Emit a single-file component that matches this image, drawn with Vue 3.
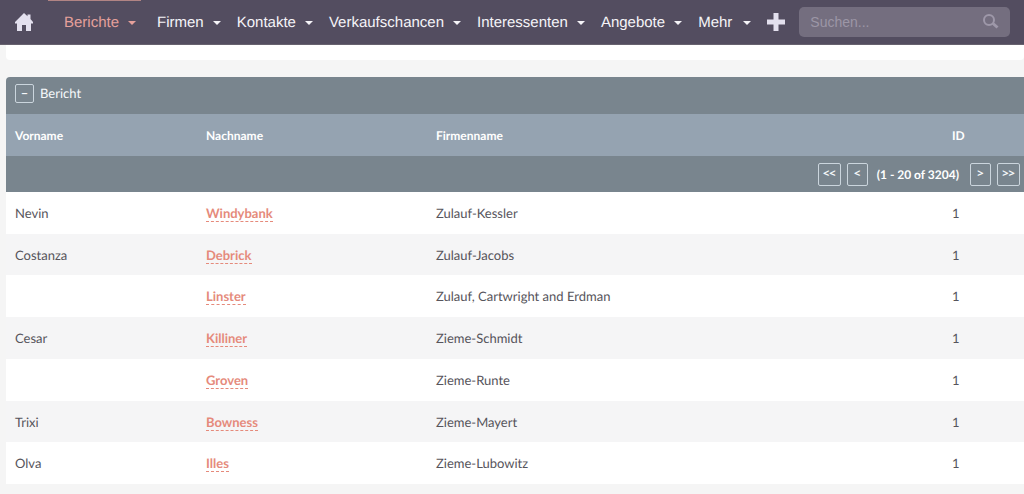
<script setup>
const menu = ['Berichte', 'Firmen', 'Kontakte', 'Verkaufschancen', 'Interessenten', 'Angebote', 'Mehr']
const rows = [
  ['Nevin', 'Windybank', 'Zulauf-Kessler', 1],
  ['Costanza', 'Debrick', 'Zulauf-Jacobs', 1],
  ['', 'Linster', 'Zulauf, Cartwright and Erdman', 1],
  ['Cesar', 'Killiner', 'Zieme-Schmidt', 1],
  ['', 'Groven', 'Zieme-Runte', 1],
  ['Trixi', 'Bowness', 'Zieme-Mayert', 1],
  ['Olva', 'Illes', 'Zieme-Lubowitz', 1],
]
</script>

<template>
  <div class="page">
    <header class="bar">
      <a class="home" href="#" aria-label="Startseite">
        <svg width="18" height="18" viewBox="0 0 18 18"><path d="M9 0 12.5 3.3V1.5h3v4.600L18 9v1.500h-2V18h-5v-6H7v6H2v-7.500H0V9z" /></svg>
      </a>
      <nav class="menu">
        <a v-for="(item, i) in menu" :key="item" href="#" :class="{ active: i === 0, more: item === 'Mehr' }">
          {{ item }}
          <svg class="caret" width="8" height="4" viewBox="0 0 8 4"><path d="M0 0h8L4 4z" /></svg>
        </a>
      </nav>
      <button class="add" type="button" aria-label="Neu">
        <svg width="18" height="18" viewBox="0 0 18 18"><path d="M6.500 0h5v6.500H18v5h-6.500V18h-5v-6.500H0v-5h6.500z" /></svg>
      </button>
      <form class="search" @submit.prevent>
        <input type="text" placeholder="Suchen..." aria-label="Suchen">
        <button type="submit" aria-label="Suche starten">
          <svg width="16" height="16" viewBox="0 0 16 16"><circle cx="6" cy="6" r="5" /><path class="handle" d="m10 9.500 4.500 4" /></svg>
        </button>
      </form>
    </header>

    <main>
      <div class="above"></div>
      <section class="report">
        <h2><button type="button" class="box toggle" aria-label="Einklappen">−</button>Bericht</h2>
        <table>
          <colgroup><col class="c-first"><col class="c-last"><col><col class="c-id"></colgroup>
          <thead>
            <tr class="heads"><th>Vorname</th><th>Nachname</th><th>Firmenname</th><th>ID</th></tr>
            <tr class="paging">
              <td colspan="4">
                <div class="pager">
                  <button type="button" class="box wide">&lt;&lt;</button>
                  <button type="button" class="box">&lt;</button>
                  <span>(1 - 20 of 3204)</span>
                  <button type="button" class="box">&gt;</button>
                  <button type="button" class="box wide">&gt;&gt;</button>
                </div>
              </td>
            </tr>
          </thead>
          <tbody>
            <tr v-for="r in rows" :key="r[1]">
              <td>{{ r[0] }}</td>
              <td><a href="#">{{ r[1] }}</a></td>
              <td>{{ r[2] }}</td>
              <td>{{ r[3] }}</td>
            </tr>
          </tbody>
        </table>
      </section>
    </main>
  </div>
</template>

<style>
body { margin: 0; background: #f5f5f5; }
</style>

<style scoped>
.page { min-height: 100vh; font-family: Lato, sans-serif; font-size: 13px; color: #56545b; text-rendering: geometricPrecision; }
.bar {
  box-sizing: border-box; height: 45px; display: flex; align-items: center;
  padding: 0 14px 0 15px; background: #534d60; border-bottom: 1px solid #67626f;
  font-family: "Liberation Sans", Arial, sans-serif; font-size: 15px;
}
.bar svg { display: block; fill: #e3e0ee; }
.home { margin-right: 15px; }
.menu { display: flex; align-self: stretch; gap: 16px; }
.menu a {
  box-sizing: border-box; display: flex; align-items: center; gap: 9px;
  border-top: 1px solid transparent; color: #f5f4f8; text-decoration: none;
}
.menu .caret { fill: #f5f4f8; margin-top: 1px; }
.menu .active { padding: 0 5px 0 16px; border-top-color: #b18484; color: #e5a09b; }
.menu .active .caret { fill: #e5a09b; }
.menu .more { gap: 11px; }
button { font: inherit; color: inherit; background: none; border: 0; padding: 0; }
.add { margin: 0 14px 0 16px; }
.search {
  flex: 1; display: flex; align-items: center; box-sizing: border-box; height: 30px;
  min-width: 0; padding: 0 11px; background: #746e7f; border-radius: 5px;
}
.search input {
  flex: 1; min-width: 0; padding: 0; border: 0; outline: 0; background: none;
  font: inherit; font-size: 14px; color: #fff;
}
.search input::placeholder { color: #9c96a6; opacity: 1; }
.search svg { fill: none; stroke: #9e98a9; stroke-width: 2; }
.search .handle { stroke-width: 3; }
main { padding-left: 6px; }
.above { height: 15px; background: #fff; border-radius: 0 0 4px 4px; }
.report { margin-top: 17px; background: #79858e; border-radius: 4px 0 0 0; }
h2 {
  display: flex; align-items: center; gap: 6px; height: 32px; margin: 0;
  padding: 0 9px 5px; font-size: 13px; font-weight: 400; color: #f5f8fa;
}
.box {
  box-sizing: border-box; width: 21px; height: 23px; border: 1px solid #cbd5dd; border-radius: 2px;
  color: #f5f8fa; font-size: 12px; font-weight: 700; line-height: 16px; padding-bottom: 2px;
}
.toggle { width: 19px; height: 19px; padding: 0; }
.wide { width: 23px; }
.pager .box { font-family: "Open Sans", sans-serif; font-size: 11px; }
table { width: 100%; table-layout: fixed; border-collapse: collapse; }
.c-first { width: 191px; }
.c-last { width: 230px; }
.c-id { width: 81px; }
th, td { padding: 0 9px; text-align: left; }
.heads { height: 42px; background: #95a3b1; color: #fff; font-size: 12px; }
.paging { height: 36px; background: #79858e; }
.paging td { padding: 0 4px; }
.pager { display: flex; align-items: center; justify-content: flex-end; gap: 6px; color: #fff; font-size: 12px; font-weight: 700; }
.pager span { padding: 0 5px 0 3px; }
tbody tr { height: 42px; background: #fff; }
tbody tr:nth-child(even) { background: #f5f5f6; }
tbody tr:nth-child(4n + 2) { height: 41px; }
tbody a { color: #e58a7b; font-weight: 700; text-decoration: none; border-bottom: 1px dashed #e58a7b; }
</style>
